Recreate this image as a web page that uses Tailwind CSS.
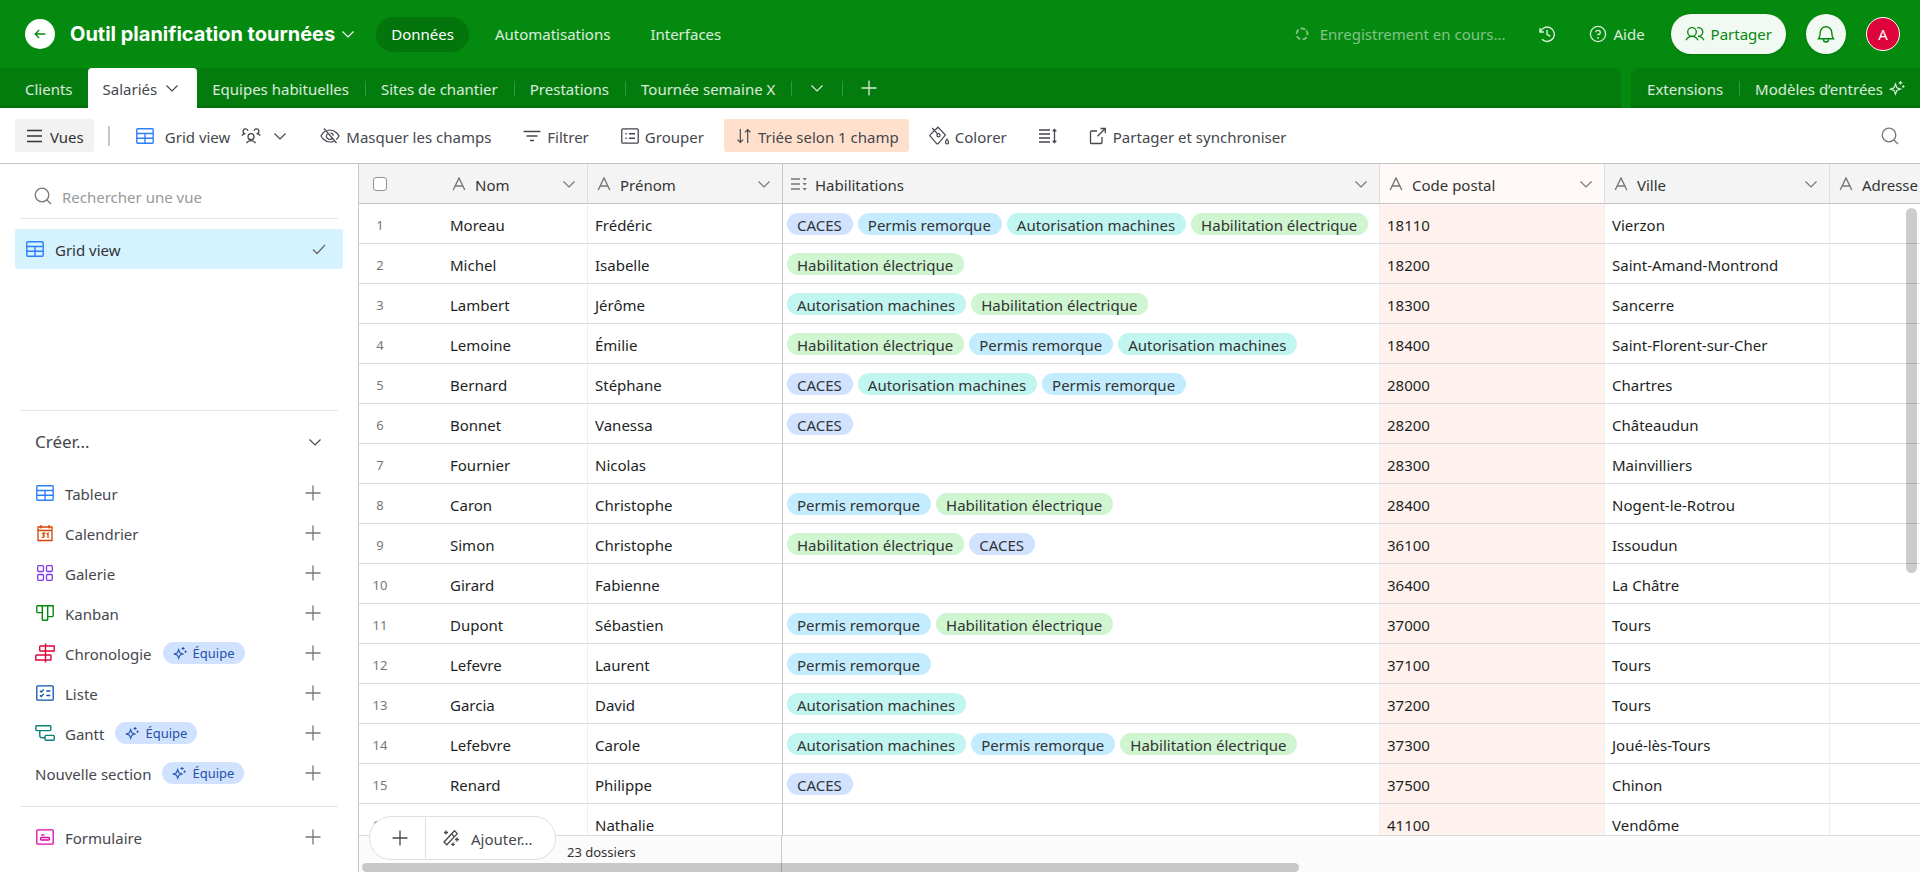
<!DOCTYPE html>
<html lang="fr">
<head>
<meta charset="utf-8">
<meta name="viewport" content="width=device-width, initial-scale=1">
<title>Outil planification tournées</title>
<script src="https://cdn.jsdelivr.net/npm/@tailwindcss/browser@4"></script>
</head>
<body class="h-screen overflow-hidden flex flex-col bg-white text-[#1d1f25] font-['Noto_Sans','Open_Sans',sans-serif] text-[15px] leading-5">

<svg class="hidden" aria-hidden="true">
  <symbol id="chev" viewBox="0 0 14 14"><path d="M1.500 4.500l5.500 5.500 5.500-5.500" fill="none" stroke="currentColor" stroke-width="1.200"/></symbol>
  <symbol id="plus" viewBox="0 0 16 16"><path d="M8 .5v15M.5 8h15" fill="none" stroke="currentColor" stroke-width="1.300"/></symbol>
  <symbol id="back" viewBox="0 0 16 16"><path d="M14 8H2.500M7 3.500L2.500 8 7 12.500" fill="none" stroke="currentColor" stroke-width="1.500"/></symbol>
  <symbol id="spin" viewBox="0 0 16 16"><circle cx="8" cy="8" r="5.500" fill="none" stroke="currentColor" stroke-width="1.800" stroke-dasharray="4.760 2.150" transform="rotate(-40 8 8)"/></symbol>
  <symbol id="hist" viewBox="0 0 18 18"><path d="M9 5v4.300l3.300 2M2 3v4h4M2.300 7A7.200 7.200 0 1 1 4 14.300" fill="none" stroke="currentColor" stroke-width="1.400"/></symbol>
  <symbol id="help" viewBox="0 0 18 18"><circle cx="9" cy="9" r="7.600" fill="none" stroke="currentColor" stroke-width="1.300"/><path d="M6.700 7.200a2.300 2.100 0 1 1 2.300 2.300v.8" fill="none" stroke="currentColor" stroke-width="1.300"/><circle cx="9" cy="12.900" r=".9" fill="currentColor"/></symbol>
  <symbol id="users" viewBox="0 0 20 16"><g fill="none" stroke="currentColor" stroke-width="1.300"><circle cx="7" cy="6" r="4.300"/><path d="M1 14.300C2.200 11.600 4.500 10.300 7 10.300s4.800 1.300 6 4M12.300 1.900A4.300 4.300 0 1 1 13 10.300c2.500 0 4.600 1.200 6 4"/></g></symbol>
  <symbol id="bell" viewBox="0 0 20 20"><path d="M4.200 8.500a5.800 5.800 0 0 1 11.600 0c0 3.600.9 5.300 1.600 6.200H2.600c.7-.9 1.600-2.600 1.600-6.200zM7.500 15v.5a2.500 2.500 0 0 0 5 0V15" fill="none" stroke="currentColor" stroke-width="1.400"/></symbol>
  <symbol id="spark" viewBox="0 0 16 16"><path d="M6.500 4l1.400 3.700 3.600 1.400-3.600 1.400-1.400 3.600-1.400-3.600L1.500 9.100l3.600-1.400zM11.500 1v3.600M9.700 2.800h3.600M14.300 5.200v2.600M13 6.500h2.600" fill="none" stroke="currentColor" stroke-width="1.200"/></symbol>
  <symbol id="menu" viewBox="0 0 16 14"><path d="M0 1.500h15M0 7h15M0 12.500h15" fill="none" stroke="currentColor" stroke-width="1.300"/></symbol>
  <symbol id="grid" viewBox="0 0 18 16"><rect x=".8" y=".8" width="16.400" height="14.400" rx="1" fill="none" stroke="currentColor" stroke-width="1.400"/><path d="M1 5.500h16M1 10.300h16M9 5.500V15" fill="none" stroke="currentColor" stroke-width="1.400"/></symbol>
  <symbol id="team" viewBox="0 0 20 16"><g fill="none" stroke="currentColor" stroke-width="1.300"><circle cx="10" cy="8.700" r="3"/><path d="M5.500 15.200a5.200 5.200 0 0 1 9 0M.8 7.700a4.600 4.600 0 0 1 3.700-2M19.200 7.700a4.600 4.600 0 0 0-3.700-2M4.500 5.700a2.400 2.400 0 1 1 2.400-2.800M15.500 5.700a2.400 2.400 0 1 0-2.400-2.800"/></g></symbol>
  <symbol id="eyeoff" viewBox="0 0 20 18"><g fill="none" stroke="currentColor" stroke-width="1.200"><path d="M4 1.500l12.500 14.500M7.200 3.500A9 9 0 0 1 10 3c6 0 9 6 9 6s-.9 1.900-2.800 3.600M14 14.200A9 9 0 0 1 10 15c-6 0-9-6-9-6s1.300-2.900 4.200-4.700M12.300 11.500A3.300 3.300 0 0 1 7.500 6.800M10.600 5.800a3.300 3.300 0 0 1 2.700 2.900"/></g></symbol>
  <symbol id="filter" viewBox="0 0 18 14"><path d="M.5 2.500h17M3.500 7h11M7 11.500h4" fill="none" stroke="currentColor" stroke-width="1.400"/></symbol>
  <symbol id="group" viewBox="0 0 18 16"><rect x=".8" y=".8" width="16.400" height="14.400" rx="1" fill="none" stroke="currentColor" stroke-width="1.300"/><path d="M8 5.800h6M8 10.200h6M4.300 5.800h1.400M4.300 10.200h1.400" fill="none" stroke="currentColor" stroke-width="1.500"/></symbol>
  <symbol id="sort" viewBox="0 0 16 16"><path d="M4.300 1v13.500M1.500 11.700l2.800 2.800 2.800-2.800M11.700 15V1.500M8.900 4.300l2.800-2.800 2.800 2.800" fill="none" stroke="currentColor" stroke-width="1.200"/></symbol>
  <symbol id="paint" viewBox="0 0 20 20"><g fill="none" stroke="currentColor" stroke-width="1.200"><path d="M3.200 2l5.600 6.200M5.500 4.500L9 1.200l7.400 7.900-7.200 8.500a1.100 1.100 0 0 1-1.600 0L1.200 10.200a1 1 0 0 1 0-1.400z"/><circle cx="9.500" cy="9.300" r="1.600"/><path d="M18 13s1.500 2 1.500 3.400a1.500 1.500 0 0 1-3 0c0-1.400 1.500-3.400 1.500-3.400z"/></g></symbol>
  <symbol id="rowh" viewBox="0 0 18 16"><path d="M0 2h11M0 6h11M0 10h11M0 14h11M15.500 1.500v13M13.700 3.300l1.800-1.800 1.800 1.800M13.700 12.700l1.800 1.800 1.800-1.800" fill="none" stroke="currentColor" stroke-width="1.300"/></symbol>
  <symbol id="open" viewBox="0 0 18 18"><path d="M8 4H2.500a1 1 0 0 0-1 1v10.500a1 1 0 0 0 1 1h9.500a1 1 0 0 0 1-1V10M8.500 9.300l7.800-7.800M11.500 1.500h4.800v4.800" fill="none" stroke="currentColor" stroke-width="1.300"/></symbol>
  <symbol id="search" viewBox="0 0 18 18"><circle cx="8" cy="8" r="6.800" fill="none" stroke="currentColor" stroke-width="1.300"/><path d="M13 13l4 4" fill="none" stroke="currentColor" stroke-width="1.300"/></symbol>
  <symbol id="check" viewBox="0 0 14 12"><path d="M1 6.500l4 4L13 2" fill="none" stroke="currentColor" stroke-width="1.300"/></symbol>
  <symbol id="cal" viewBox="0 0 18 18"><path d="M2 3h14v13.500H2zM2 6.500h14M5 1v3.500M13 1v3.500" fill="none" stroke="currentColor" stroke-width="1.300"/><path d="M6 9.200h2.500L7.200 10.800a1.300 1.300 0 1 1-1.400 2M10.500 10l1.500-.8v4.800" fill="none" stroke="currentColor" stroke-width="1.300"/></symbol>
  <symbol id="gal" viewBox="0 0 18 18"><g fill="none" stroke="currentColor" stroke-width="1.300"><rect x="1.700" y="1.700" width="5.800" height="5.800" rx="1"/><rect x="10.500" y="1.700" width="5.800" height="5.800" rx="1"/><rect x="1.700" y="10.500" width="5.800" height="5.800" rx="1"/><rect x="10.500" y="10.500" width="5.800" height="5.800" rx="1"/></g></symbol>
  <symbol id="kan" viewBox="0 0 18 16"><path d="M.8.8h16.400v10a.8.800 0 0 1-.8.800h-4.700M.8.800v6a.8.800 0 0 0 .8.800h4.700M6.300.8v13.600a.8.800 0 0 0 .8.800h3.800a.8.800 0 0 0 .8-.8V.8" fill="none" stroke="currentColor" stroke-width="1.400"/></symbol>
  <symbol id="chrono" viewBox="0 0 20 20"><path d="M10.500.5v19M5.500 3h13.700v5H5.500a.8.800 0 0 1-.8-.8V3.800a.8.800 0 0 1 .8-.8zM1.600 12h13.600a.8.800 0 0 1 .8.800v3.400a.8.800 0 0 1-.8.800H.8v-4.200a.8.800 0 0 1 .8-.8z" fill="none" stroke="currentColor" stroke-width="1.400"/></symbol>
  <symbol id="list" viewBox="0 0 18 16"><rect x=".8" y=".8" width="16.400" height="14.400" rx="1" fill="none" stroke="currentColor" stroke-width="1.300"/><path d="M4 5.800l1.200 1.200 2.600-2.600M4 10.300l1.200 1.200 2.600-2.600M10.300 6h4M10.300 10.500h4" fill="none" stroke="currentColor" stroke-width="1.300"/></symbol>
  <symbol id="gantt" viewBox="0 0 20 16"><g fill="none" stroke="currentColor" stroke-width="1.400"><rect x=".8" y=".8" width="15" height="4.800" rx="1"/><rect x="10" y="10.400" width="9.300" height="4.800" rx="1"/><path d="M4.800 5.800v5a2 2 0 0 0 2 2H10"/></g></symbol>
  <symbol id="form" viewBox="0 0 18 16"><rect x=".8" y=".8" width="16.400" height="14.400" rx="1" fill="none" stroke="currentColor" stroke-width="1.300"/><path d="M5 6h3.500" stroke="currentColor" stroke-width="1.300"/><rect x="4.500" y="8.500" width="9" height="2.500" rx="1" fill="none" stroke="currentColor" stroke-width="1.300"/></symbol>
  <symbol id="txt" viewBox="0 0 14 14"><path d="M1.200 13L7 1l5.800 12M3.200 9h7.600" fill="none" stroke="currentColor" stroke-width="1.400"/></symbol>
  <symbol id="multi" viewBox="0 0 16 14"><path d="M0 2h9M0 7h9M0 12h9" fill="none" stroke="currentColor" stroke-width="1.400"/><path d="M11.500 1l2.200 2.500L15.900 1zM11.500 6l2.200 2.500L15.900 6zM11.500 11l2.200 2.500 2.200-2.500z" fill="currentColor"/></symbol>
  <symbol id="wand" viewBox="0 0 18 18"><g fill="none" stroke="currentColor" stroke-width="1.300"><path d="M12.500 1.800l2.800 2.800L4.800 15.800 2 13z" stroke-linejoin="round"/><path d="M9.600 4.900l2.800 2.800M4 1.500v4M2 3.500h4M15 8.500v4M13 10.500h4M11 13.500v3.600M9.200 15.300h3.600"/></g></symbol>
</svg>

<header class="shrink-0 bg-[#048a0e] text-white/85">
  <div class="flex h-[68px] items-center pl-[25px] pr-5">
    <button class="grid size-[30px] place-items-center rounded-full bg-white text-[#048a0e]" aria-label="Retour"><svg class="size-[14px]"><use href="#back"/></svg></button>
    <button class="ml-[15px] flex items-center gap-1.5 text-white"><span class="font-['Inter',sans-serif] text-[20px] font-bold leading-6">Outil planification tournées</span><svg class="size-3.5"><use href="#chev"/></svg></button>
    <nav class="ml-[21px] flex items-center">
      <a href="#" class="flex h-[35px] items-center rounded-full bg-[#04750c] px-[15px] text-white">Données</a>
      <a href="#" class="ml-[26px]">Automatisations</a>
      <a href="#" class="ml-10">Interfaces</a>
    </nav>
    <div class="ml-auto flex items-center">
      <span class="flex items-center gap-2.5 text-white/50"><svg class="size-4"><use href="#spin"/></svg>Enregistrement en cours...</span>
      <button class="ml-[33px]" aria-label="Historique"><svg class="size-[18px]"><use href="#hist"/></svg></button>
      <button class="ml-[33px] flex items-center gap-1.5"><svg class="size-[18px]"><use href="#help"/></svg>Aide</button>
      <button class="ml-[26px] flex h-10 items-center gap-1.5 rounded-full bg-[#f2f9f3] px-3.5 text-[#048a0e] shadow-sm"><svg class="h-4 w-5"><use href="#users"/></svg>Partager</button>
      <button class="ml-5 grid size-10 place-items-center rounded-full bg-[#f2f9f3] text-[#048a0e] shadow-sm" aria-label="Notifications"><svg class="size-5"><use href="#bell"/></svg></button>
      <button class="ml-5 grid size-[34px] place-items-center rounded-full border border-white bg-[#dc043b] text-white" aria-label="Compte">A</button>
    </div>
  </div>
  <div class="flex h-10 gap-2.5">
    <nav class="flex min-w-0 flex-1 items-center rounded-tr-lg bg-[#047c0d] shadow-[inset_0_-3px_3px_-2px_rgba(0,0,0,0.2)]">
      <a href="#" class="pl-[25px] pr-[15px] pt-0.5">Clients</a>
      <a href="#" class="flex h-full items-center gap-2 rounded-t-[4px] bg-white pl-[15px] pr-[18px] text-[#45474d]"><span class="pt-0.5">Salariés</span><svg class="size-3.5"><use href="#chev"/></svg></a>
      <a href="#" class="pl-[15px] pr-4 pt-0.5">Equipes habituelles</a><span class="h-[15px] w-px bg-white/20"></span>
      <a href="#" class="pl-[15px] pr-4 pt-0.5">Sites de chantier</a><span class="h-[15px] w-px bg-white/20"></span>
      <a href="#" class="pl-[15px] pr-4 pt-0.5">Prestations</a><span class="h-[15px] w-px bg-white/20"></span>
      <a href="#" class="pl-[15px] pr-4 pt-0.5">Tournée semaine X</a><span class="h-[15px] w-px bg-white/20"></span>
      <button class="px-[18px]" aria-label="Toutes les tables"><svg class="size-3.5"><use href="#chev"/></svg></button><span class="h-[15px] w-px bg-white/20"></span>
      <button class="px-[18px]" aria-label="Ajouter une table"><svg class="size-4"><use href="#plus"/></svg></button>
    </nav>
    <nav class="flex items-center rounded-tl-lg bg-[#047c0d] pr-[15px] shadow-[inset_0_-3px_3px_-2px_rgba(0,0,0,0.2)]">
      <a href="#" class="px-4 pt-0.5">Extensions</a><span class="h-[15px] w-px bg-white/20"></span>
      <a href="#" class="flex items-center gap-1.5 pl-[15px]"><span class="pt-0.5">Modèles d’entrées</span><svg class="size-4"><use href="#spark"/></svg></a>
    </nav>
  </div>
</header>

<div class="flex h-14 shrink-0 items-center border-b border-[#c6c6c6] pl-[15px] pr-[21px] text-[#45474d]">
  <button class="flex h-[33px] items-center gap-[7px] rounded-[3px] bg-[#f2f2f2] pl-3 pr-2.5 text-[#333]"><svg class="h-3.5 w-4"><use href="#menu"/></svg><span class="pt-0.5">Vues</span></button>
  <span class="ml-[14px] h-5 w-0.5 bg-[#c6c6c6]"></span>
  <button class="ml-[26px] flex items-center"><svg class="h-4 w-[18px] text-[#2d7ff9]"><use href="#grid"/></svg><span class="ml-[11px] pt-0.5">Grid view</span><svg class="ml-[11px] h-4 w-5"><use href="#team"/></svg><svg class="ml-3 size-3.5"><use href="#chev"/></svg></button>
  <button class="ml-[33px] flex items-center gap-1.5"><svg class="h-[18px] w-5"><use href="#eyeoff"/></svg><span class="pt-0.5">Masquer les champs</span></button>
  <button class="ml-8 flex items-center gap-1.5"><svg class="h-3.5 w-[18px]"><use href="#filter"/></svg><span class="pt-0.5">Filtrer</span></button>
  <button class="ml-8 flex items-center gap-1.5"><svg class="h-4 w-[18px]"><use href="#group"/></svg><span class="pt-0.5">Grouper</span></button>
  <button class="ml-5 flex h-[33px] items-center gap-1.5 rounded-[3px] bg-[#ffe0cc] pl-3 pr-2.5"><svg class="size-4"><use href="#sort"/></svg><span class="pt-0.5">Triée selon 1 champ</span></button>
  <button class="ml-5 flex items-center gap-1.5"><svg class="size-5"><use href="#paint"/></svg><span class="pt-0.5">Colorer</span></button>
  <button class="ml-8" aria-label="Hauteur de ligne"><svg class="h-4 w-[18px]"><use href="#rowh"/></svg></button>
  <button class="ml-8 flex items-center gap-1.5"><svg class="size-[18px]"><use href="#open"/></svg><span class="pt-0.5">Partager et synchroniser</span></button>
  <button class="ml-auto text-[#777]" aria-label="Rechercher"><svg class="size-[18px]"><use href="#search"/></svg></button>
</div>

<div class="flex min-h-0 flex-1">
  <aside class="flex w-[359px] shrink-0 flex-col border-r border-[#c6c6c6] px-5 text-[#45474d]">
    <label class="mt-2.5 flex h-[45px] shrink-0 items-center gap-2.5 border-b border-[#e5e5e5] pl-3.5 text-[#777]"><svg class="size-[18px]"><use href="#search"/></svg><input type="text" placeholder="Rechercher une vue" aria-label="Rechercher une vue" class="min-w-0 flex-1 pt-0.5 outline-none placeholder:text-[#999]"></label>
    <a href="#" class="-mx-[5px] mt-2.5 flex h-10 shrink-0 items-center rounded-[3px] bg-[#d5f2ff] pl-[11px] pr-[17px] text-[#333]"><svg class="h-4 w-[18px] text-[#2d7ff9]"><use href="#grid"/></svg><span class="ml-[11px] flex-1 pt-0.5">Grid view</span><svg class="h-3 w-3.5 text-[#666]"><use href="#check"/></svg></a>
    <div class="mt-auto border-t border-[#e5e5e5]">
      <button class="flex h-[62px] w-full items-center justify-between pl-[15px] pr-4 text-[17px]">Créer...<svg class="size-3.5"><use href="#chev"/></svg></button>
      <ul id="create" class="pb-[13px]"></ul>
    </div>
    <ul id="forms" class="border-t border-[#e5e5e5] pb-[15px] pt-2.5"></ul>
  </aside>

  <main class="relative flex min-w-0 flex-1 flex-col overflow-hidden">
    <div class="min-h-0 flex-1 overflow-hidden">
      <table class="w-[1696px] table-fixed border-separate border-spacing-0 text-left">
        <colgroup><col class="w-[84px]"><col class="w-[145px]"><col class="w-[195px]"><col class="w-[597px]"><col class="w-[225px]"><col class="w-[225px]"><col class="w-[225px]"></colgroup>
        <thead><tr id="head" class="h-10 bg-[#f4f4f4] text-[#333]"></tr></thead>
        <tbody id="rows"></tbody>
      </table>
    </div>
    <footer class="flex h-[37px] shrink-0 border-t border-[#dcdcdc] bg-[#fbfbfb] text-[13px]">
      <div class="w-[423px] shrink-0 border-r border-[#c6c6c6] pl-52 pt-1.5 text-[#333]">23 dossiers</div>
    </footer>
    <div class="absolute bottom-3 left-2.5 flex h-11 items-center rounded-full border border-[#e0e0e0] bg-white text-[#45474d]">
      <button class="flex h-full items-center border-r border-[#e0e0e0] pl-[22px] pr-[17px]" aria-label="Ajouter une ligne"><svg class="size-4"><use href="#plus"/></svg></button>
      <button class="flex h-full items-center gap-[11px] pl-4 pr-[22px]"><svg class="size-[18px]"><use href="#wand"/></svg><span class="pt-0.5">Ajouter...</span></button>
    </div>
    <div class="absolute bottom-0 left-[3px] h-[9px] w-3/5 rounded-full bg-black/20"></div>
    <div class="absolute right-[3px] top-11 h-[365px] w-[11px] rounded-full bg-black/20"></div>
  </main>
</div>

<script>
const badge = '<span class="ml-[11px] flex h-[22px] items-center gap-1.5 rounded-full bg-[#d1e2ff] px-2.5 text-[13px] text-[#1d52a8]"><svg class="size-3.5"><use href="#spark"/></svg>Équipe</span>';
const item = ([name, icon, size, color, team]) => `<li><button class="flex h-10 w-full items-center pl-[15px] pr-[17px]">${icon ? `<span class="mr-2.5 grid w-5 place-items-center ${color}"><svg class="${size}"><use href="#${icon}"/></svg></span>` : ''}<span class="pt-0.5">${name}</span>${team ? badge : ''}<svg class="ml-auto size-4 text-[#777]"><use href="#plus"/></svg></button></li>`;
document.getElementById('create').innerHTML = [
  ['Tableur', 'grid', 'h-4 w-[18px]', 'text-[#2d7ff9]'],
  ['Calendrier', 'cal', 'size-[18px]', 'text-[#d54402]'],
  ['Galerie', 'gal', 'size-[18px]', 'text-[#7c37ef]'],
  ['Kanban', 'kan', 'h-4 w-[18px]', 'text-[#048a0e]'],
  ['Chronologie', 'chrono', 'size-5', 'text-[#dc043b]', true],
  ['Liste', 'list', 'h-4 w-[18px]', 'text-[#0d52ac]'],
  ['Gantt', 'gantt', 'h-4 w-5', 'text-[#0d7f78]', true],
  ['Nouvelle section', '', '', '', true]
].map(item).join('');
document.getElementById('forms').innerHTML = item(['Formulaire', 'form', 'h-4 w-[18px]', 'text-[#dd04a8]']);

document.getElementById('head').innerHTML =
  '<th class="border-b border-[#c6c6c6] pl-3.5"><input type="checkbox" aria-label="Tout sélectionner" class="block size-3.5 appearance-none rounded-[3px] border border-[#8a949e] bg-white"></th>' +
  [
    ['Nom', 'txt', 'border-r-[#dedede]'], ['Prénom', 'txt', 'border-r-[#c6c6c6]'], ['Habilitations', 'multi', 'border-r-[#dedede]'],
    ['Code postal', 'txt', 'border-r-[#dedede] bg-[#fffaf7]'], ['Ville', 'txt', 'border-r-[#dedede]'], ['Adresse', 'txt', 'border-r-[#dedede]']
  ].map(([n, i, c]) => `<th class="border-b border-r border-b-[#c6c6c6] pl-2 pr-[11px] font-normal ${c}"><div class="flex items-center text-[#333]"><svg class="h-3.5 w-4 text-[#777]"><use href="#${i}"/></svg><span class="ml-2 flex-1 pt-0.5">${n}</span><svg class="size-3.5 text-[#777]"><use href="#chev"/></svg></div></th>`).join('');

const tags = {
  C: ['CACES', 'bg-[#d1e2ff]'], P: ['Permis remorque', 'bg-[#c4ecff]'],
  A: ['Autorisation machines', 'bg-[#c1f5f0]'], H: ['Habilitation électrique', 'bg-[#cff5d1]']
};
const tag = k => `<span class="h-[22px] overflow-hidden rounded-full pl-2.5 pr-[11px] leading-6 ${tags[k][1]}">${tags[k][0]}</span>`;
const data = [
  ['Moreau', 'Frédéric', 'CPAH', '18110', 'Vierzon'], ['Michel', 'Isabelle', 'H', '18200', 'Saint-Amand-Montrond'],
  ['Lambert', 'Jérôme', 'AH', '18300', 'Sancerre'], ['Lemoine', 'Émilie', 'HPA', '18400', 'Saint-Florent-sur-Cher'],
  ['Bernard', 'Stéphane', 'CAP', '28000', 'Chartres'], ['Bonnet', 'Vanessa', 'C', '28200', 'Châteaudun'],
  ['Fournier', 'Nicolas', '', '28300', 'Mainvilliers'], ['Caron', 'Christophe', 'PH', '28400', 'Nogent-le-Rotrou'],
  ['Simon', 'Christophe', 'HC', '36100', 'Issoudun'], ['Girard', 'Fabienne', '', '36400', 'La Châtre'],
  ['Dupont', 'Sébastien', 'PH', '37000', 'Tours'], ['Lefevre', 'Laurent', 'P', '37100', 'Tours'],
  ['Garcia', 'David', 'A', '37200', 'Tours'], ['Lefebvre', 'Carole', 'APH', '37300', 'Joué-lès-Tours'],
  ['Renard', 'Philippe', 'C', '37500', 'Chinon'], ['', 'Nathalie', '', '41100', 'Vendôme']
];
const cell = 'border-b border-r border-b-[#dcdcdc] pl-[7px] pt-0.5';
document.getElementById('rows').innerHTML = data.map(([nom, pre, t, cp, ville], i) => `<tr class="h-10">
  <td class="border-b border-[#dcdcdc] pt-0.5 text-[13px] text-[#777]"><div class="w-[42px] text-center">${i + 1}</div></td>
  <td class="${cell} border-r-[#eeeeee]">${nom}</td>
  <td class="${cell} border-r-[#c6c6c6]">${pre}</td>
  <td class="border-b border-r border-b-[#dcdcdc] border-r-[#eeeeee] pl-1 text-[#333]"><div class="flex gap-[5px]">${[...t].map(tag).join('')}</div></td>
  <td class="${cell} border-r-[#eeeeee] bg-[#fff2ee]">${cp}</td>
  <td class="${cell} border-r-[#eeeeee]">${ville}</td>
  <td class="${cell} border-r-[#eeeeee]"></td>
</tr>`).join('');
</script>
</body>
</html>
